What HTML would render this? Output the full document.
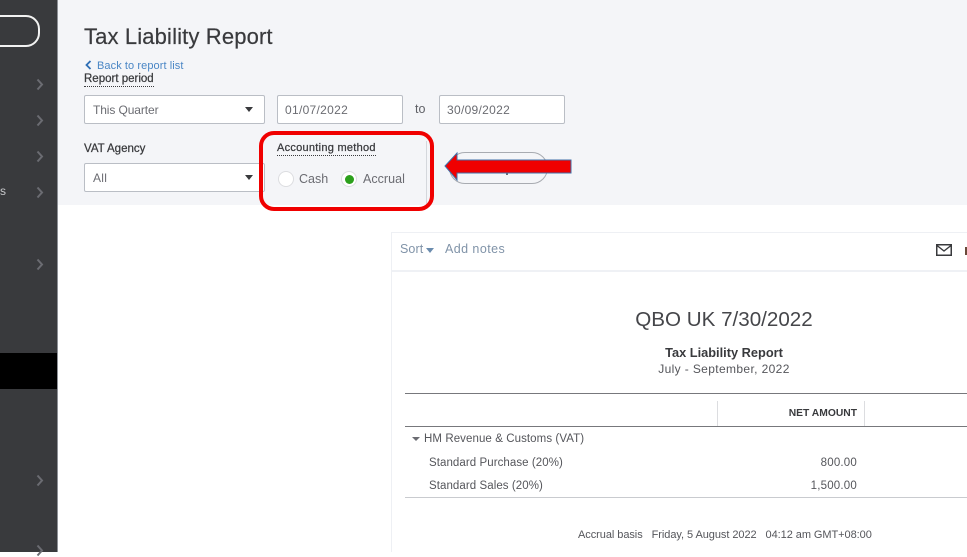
<!DOCTYPE html>
<html lang="en">
<head>
<meta charset="utf-8">
<title>Tax Liability Report</title>
<style>
html,body{margin:0;padding:0;background:#fff;}
body{position:relative;width:967px;height:552px;overflow:hidden;font-family:"Liberation Sans",sans-serif;color:#393a3d;}
.a{position:absolute;white-space:nowrap;}
.box{position:absolute;box-sizing:border-box;background:#fff;border:1px solid #babec5;border-radius:2px;}
.tri{position:absolute;width:0;height:0;border-left:4px solid transparent;border-right:4px solid transparent;border-top:5px solid #393a3d;}
.lbl{font-size:11.5px;color:#393a3d;-webkit-text-stroke:.25px #393a3d;}
.dot{border-bottom:1px dotted #393a3d;padding-bottom:1px;}
.v{font-size:12px;color:#6b6c72;letter-spacing:.3px;}
.chev{position:absolute;left:36px;}
.r{text-align:right;}
</style>
</head>
<body>
<!-- header band -->
<div class="a" style="left:57px;top:0;width:910px;height:205px;background:#f4f5f8;"></div>

<!-- sidebar -->
<div class="a" style="left:0;top:0;width:57px;height:552px;background:#393a3d;border-right:1px solid #8d9096;"></div>
<div class="a" style="left:-20px;top:15px;width:60px;height:32px;box-sizing:border-box;border:2px solid #f2f2f2;border-radius:14px;"></div>
<div class="a" style="left:0;top:353px;width:57px;height:36px;background:#000;"></div>
<div class="a" style="left:0;top:184px;font-size:12px;color:#c8c9cc;">s</div>
<svg class="chev" style="top:78px" width="8" height="13" viewBox="0 0 8 13"><path d="M1.5 1.5L6 6.5L1.5 11.5" fill="none" stroke="#6b6c72" stroke-width="2"/></svg>
<svg class="chev" style="top:114px" width="8" height="13" viewBox="0 0 8 13"><path d="M1.5 1.5L6 6.5L1.5 11.5" fill="none" stroke="#6b6c72" stroke-width="2"/></svg>
<svg class="chev" style="top:150px" width="8" height="13" viewBox="0 0 8 13"><path d="M1.5 1.5L6 6.5L1.5 11.5" fill="none" stroke="#6b6c72" stroke-width="2"/></svg>
<svg class="chev" style="top:186px" width="8" height="13" viewBox="0 0 8 13"><path d="M1.5 1.5L6 6.5L1.5 11.5" fill="none" stroke="#6b6c72" stroke-width="2"/></svg>
<svg class="chev" style="top:258px" width="8" height="13" viewBox="0 0 8 13"><path d="M1.5 1.5L6 6.5L1.5 11.5" fill="none" stroke="#6b6c72" stroke-width="2"/></svg>
<svg class="chev" style="top:474px" width="8" height="13" viewBox="0 0 8 13"><path d="M1.5 1.5L6 6.5L1.5 11.5" fill="none" stroke="#6b6c72" stroke-width="2"/></svg>
<svg class="chev" style="top:544px" width="8" height="13" viewBox="0 0 8 13"><path d="M1.5 1.5L6 6.5L1.5 11.5" fill="none" stroke="#6b6c72" stroke-width="2"/></svg>

<!-- title -->
<div class="a" style="left:84px;top:24px;font-size:22px;line-height:26px;color:#393a3d;letter-spacing:.14px;-webkit-text-stroke:.2px #393a3d;">Tax Liability Report</div>
<svg class="a" style="left:85px;top:60px" width="7" height="10" viewBox="0 0 7 10"><path d="M5.5 1L1.5 5L5.5 9" fill="none" stroke="#2f6fb5" stroke-width="1.8"/></svg>
<div class="a" style="left:97px;top:59px;font-size:11px;line-height:14px;color:#4a86c5;letter-spacing:.08px;">Back to report list</div>
<div class="a lbl" style="left:84px;top:72px;line-height:14px;"><span class="dot">Report period</span></div>

<!-- row 1 -->
<div class="box" style="left:84px;top:95px;width:181px;height:29px;"></div>
<div class="a v" style="left:93px;top:103px;line-height:14px;letter-spacing:-.1px;">This Quarter</div>
<div class="tri" style="left:245px;top:107px;"></div>
<div class="box" style="left:277px;top:95px;width:126px;height:29px;"></div>
<div class="a v" style="left:285px;top:103px;line-height:14px;">01/07/2022</div>
<div class="a" style="left:415px;top:102px;font-size:12.5px;line-height:14px;color:#5f6066;">to</div>
<div class="box" style="left:439px;top:95px;width:126px;height:29px;"></div>
<div class="a v" style="left:447px;top:103px;line-height:14px;">30/09/2022</div>

<!-- row 2 -->
<div class="a lbl" style="left:84px;top:142px;line-height:14px;">VAT Agency</div>
<div class="box" style="left:84px;top:163px;width:181px;height:29px;"></div>
<div class="a v" style="left:93px;top:171px;line-height:14px;">All</div>
<div class="tri" style="left:245px;top:175px;"></div>

<div class="a lbl" style="left:277px;top:141px;line-height:14px;font-size:11px;letter-spacing:.27px;"><span class="dot">Accounting method</span></div>
<div class="a" style="left:278px;top:171px;width:16px;height:16px;box-sizing:border-box;background:#fff;border:1px solid #dcdde0;border-radius:50%;"></div>
<div class="a" style="left:299px;top:172px;font-size:12.5px;line-height:15px;color:#6b6c72;">Cash</div>
<div class="a" style="left:341px;top:171px;width:16px;height:16px;box-sizing:border-box;background:#fff;border:1px solid #dcdde0;border-radius:50%;"></div>
<div class="a" style="left:345px;top:175px;width:9px;height:9px;background:#2ca01c;border-radius:50%;"></div>
<div class="a" style="left:363px;top:172px;font-size:12.5px;line-height:15px;color:#6b6c72;letter-spacing:.03px;">Accrual</div>
<div class="a" style="left:426px;top:141px;width:1px;height:65px;background:#d4d7dc;"></div>

<!-- obscured button -->
<div class="a" style="left:449px;top:152px;width:99px;height:32px;box-sizing:border-box;border:1px solid #a8abb1;border-radius:16px;"></div>
<div class="a" style="left:506px;top:172px;width:2px;height:3px;background:#6b6c72;"></div>

<!-- red highlight + arrow -->
<div class="a" style="left:259px;top:131px;width:175px;height:80px;box-sizing:border-box;border:4px solid #f00000;border-radius:15px;"></div>
<svg class="a" style="left:443px;top:151px" width="130" height="32" viewBox="0 0 130 32"><path d="M2 15L14 2V9H128V22H14V29Z" fill="#f00000" stroke="#3f6fa8" stroke-width="1"/></svg>

<!-- report card -->
<div class="a" style="left:391px;top:232px;width:576px;height:320px;box-sizing:border-box;background:#fff;border:1px solid #eef0f4;border-right:0;border-bottom:0;"></div>
<div class="a" style="left:392px;top:270px;width:575px;height:2px;background:#eff1f5;"></div>
<div class="a" style="left:400px;top:241px;font-size:12.5px;line-height:16px;color:#8093a8;letter-spacing:.1px;">Sort</div>
<div class="a" style="left:426px;top:248px;width:0;height:0;border-left:4.5px solid transparent;border-right:4.5px solid transparent;border-top:5px solid #6b8cae;"></div>
<div class="a" style="left:445px;top:241px;font-size:12.5px;line-height:16px;color:#8093a8;letter-spacing:.43px;">Add notes</div>
<svg class="a" style="left:936px;top:244px" width="16" height="12" viewBox="0 0 16 12"><rect x=".75" y=".75" width="14.5" height="10.5" fill="#fff" stroke="#393a3d" stroke-width="1.5"/><path d="M1 1.5L8 7L15 1.5" fill="none" stroke="#393a3d" stroke-width="1.4"/></svg>
<div class="a" style="left:965px;top:247px;width:2px;height:8px;background:#6a4a3a;"></div>

<div class="a" style="left:574px;top:308px;width:300px;text-align:center;font-size:20.6px;line-height:24px;color:#45464a;">QBO UK 7/30/2022</div>
<div class="a" style="left:574px;top:345px;width:300px;text-align:center;font-size:12.8px;line-height:15px;font-weight:bold;color:#393a3d;">Tax Liability Report</div>
<div class="a" style="left:574px;top:362px;width:300px;text-align:center;font-size:12px;line-height:15px;color:#55565b;letter-spacing:.37px;">July - September, 2022</div>

<!-- table -->
<div class="a" style="left:405px;top:393px;width:562px;height:1px;background:#77787c;"></div>
<div class="a" style="left:717px;top:401px;width:1px;height:25px;background:#dcdde0;"></div>
<div class="a" style="left:864px;top:401px;width:1px;height:25px;background:#dcdde0;"></div>
<div class="a r" style="left:700px;top:407px;width:157px;font-size:10.3px;line-height:13px;font-weight:bold;color:#393a3d;">NET AMOUNT</div>
<div class="a" style="left:405px;top:426px;width:562px;height:1px;background:#77787c;"></div>

<div class="a" style="left:412px;top:437px;width:0;height:0;border-left:4px solid transparent;border-right:4px solid transparent;border-top:4px solid #6b6c72;"></div>
<div class="a" style="left:424px;top:432px;font-size:11.5px;line-height:15px;color:#55565b;letter-spacing:.08px;">HM Revenue &amp; Customs (VAT)</div>
<div class="a" style="left:429px;top:456px;font-size:11.5px;line-height:15px;color:#55565b;letter-spacing:.07px;">Standard Purchase (20%)</div>
<div class="a r" style="left:757px;top:456px;width:100px;font-size:11.5px;line-height:15px;color:#55565b;letter-spacing:.2px;">800.00</div>
<div class="a" style="left:429px;top:479px;font-size:11.5px;line-height:15px;color:#55565b;letter-spacing:.07px;">Standard Sales (20%)</div>
<div class="a r" style="left:757px;top:479px;width:100px;font-size:11.5px;line-height:15px;color:#55565b;letter-spacing:.2px;">1,500.00</div>
<div class="a" style="left:405px;top:497px;width:562px;height:1px;background:#c9cbcf;"></div>

<div class="a" style="left:578px;top:528px;font-size:11px;line-height:14px;color:#55565b;letter-spacing:-.06px;">Accrual basis&nbsp;&nbsp; Friday, 5 August 2022&nbsp;&nbsp; 04:12 am GMT+08:00</div>
</body>
</html>
